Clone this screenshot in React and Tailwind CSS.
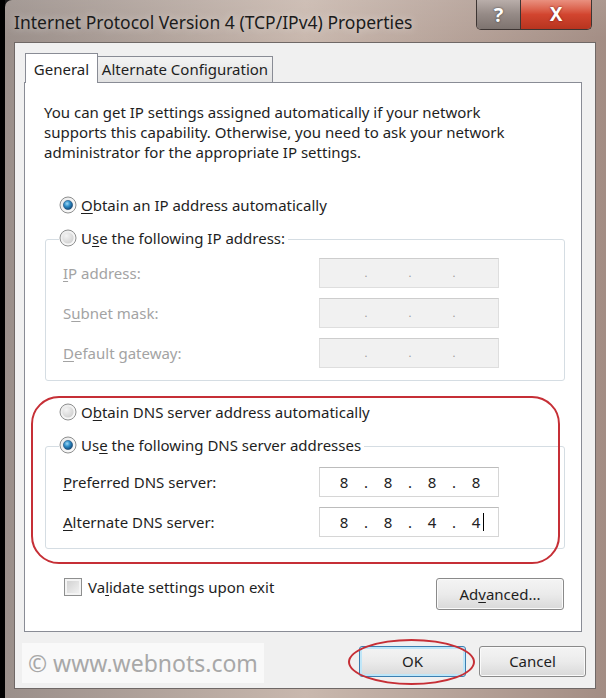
import React from 'react';

/**
 * Win7 style radio bullet
 */
function Radio({ checked = false }) {
  return (
    <svg width="18" height="18" viewBox="0 0 18 18" className="shrink-0">
      <defs>
        <linearGradient id="radioRing" x1="0" y1="0" x2="1" y2="1">
          <stop offset="0" stopColor="#e9e9e9" />
          <stop offset="1" stopColor="#fdfdfd" />
        </linearGradient>
        <radialGradient id="radioDot" cx="0.4" cy="0.35" r="0.7">
          <stop offset="0" stopColor="#9fd8f6" />
          <stop offset="0.45" stopColor="#2f8ec8" />
          <stop offset="1" stopColor="#0f3f6e" />
        </radialGradient>
        <radialGradient id="radioEmpty" cx="0.35" cy="0.3" r="0.8">
          <stop offset="0" stopColor="#f4f4f4" />
          <stop offset="1" stopColor="#cfcfcf" />
        </radialGradient>
      </defs>
      <circle cx="9" cy="9" r="8" fill="url(#radioRing)" stroke="#8e8f8f" strokeWidth="1" />
      {checked ? (
        <circle cx="9" cy="9" r="4.6" fill="url(#radioDot)" stroke="#1d4f7c" strokeWidth="0.6" />
      ) : (
        <circle cx="9" cy="9" r="5.6" fill="url(#radioEmpty)" />
      )}
    </svg>
  );
}

function RadioRow({ checked, children }) {
  return (
    <div className="ml-[15px] h-[20px] flex items-center relative z-10 self-start bg-white pr-[3px]">
      <Radio checked={checked} />
      <span className="ml-[4px] text-[15px] leading-[20px] text-[#1e1e1e]">{children}</span>
    </div>
  );
}

/**
 * IP address box - four cells split by dots
 */
function IpBox({ values, disabled = false, caret = false }) {
  const cells = values || ['', '', '', ''];
  return (
    <div
      className={[
        'w-[180px] h-[30px] flex items-center pl-[6px] border',
        disabled
          ? 'bg-[#f1f1f1] border-[#dedede] border-t-[#cdcdcd]'
          : 'bg-white border-[#d6d6d6] border-t-[#bcbcbc]',
      ].join(' ')}
    >
      {cells.map((v, i) => (
        <React.Fragment key={i}>
          <span className="w-[36px] text-center text-[15px] leading-[20px] text-[#222] relative">
            {v}
            {caret && i === 3 && (
              <span className="absolute top-[1px] right-[10px] w-px h-[18px] bg-black" />
            )}
          </span>
          {i < 3 && (
            <span
              className={[
                'w-[8px] text-center leading-[20px]',
                disabled ? 'text-[11px] text-[#9a9a9a]' : 'text-[15px] text-[#222]',
              ].join(' ')}
            >
              .
            </span>
          )}
        </React.Fragment>
      ))}
    </div>
  );
}

function FieldRow({ label, accessIdx, disabled, values, caret }) {
  return (
    <div className="flex items-center h-[30px]">
      <span
        className={[
          'w-[256px] text-[15px] leading-[20px]',
          disabled ? 'text-[#a3a3a3]' : 'text-[#1e1e1e]',
        ].join(' ')}
      >
        {label.slice(0, accessIdx)}
        <span className="underline underline-offset-2">{label[accessIdx]}</span>
        {label.slice(accessIdx + 1)}
      </span>
      <IpBox values={values} disabled={disabled} caret={caret} />
    </div>
  );
}

function Key({ children }) {
  return <span className="underline underline-offset-2">{children}</span>;
}

function WinButton({ children, isDefault = false, className = '' }) {
  return (
    <div
      className={[
        'flex items-center justify-center rounded-[3px] border text-[15px] text-[#1e1e1e]',
        'bg-gradient-to-b from-[#f4f4f4] via-[#ebebeb] to-[#d9d9d9]',
        isDefault
          ? 'border-[#3c7fb1] shadow-[inset_0_0_0_2px_#bfe6f8]'
          : 'border-[#8a8a8a] shadow-[inset_0_0_0_1px_#fafafa]',
        className,
      ].join(' ')}
    >
      {children}
    </div>
  );
}

export default function App() {
  return (
    <div className="relative w-[606px] h-[698px] bg-black flex overflow-hidden font-['Noto_Sans',sans-serif]">
      {/* Aero glass frame */}
      <div className="ml-[5px] flex-1 flex flex-col rounded-tl-[7px] bg-gradient-to-r from-[#9a8f8a] via-[#c9b8ae] to-[#a38d84]">
        {/* Title bar */}
        <div className="h-[42px] flex items-start pl-[9px] bg-gradient-to-b from-white/10 to-transparent">
          <div className="mt-[9px] text-[17.5px] leading-[26px] text-[#1b1b1b] [text-shadow:0_0_8px_rgba(255,255,255,0.6)]">
            Internet Protocol Version 4 (TCP/IPv4) Properties
          </div>
          <div className="ml-auto mr-[14px] flex h-[30px] rounded-b-[5px] border border-t-0 border-[#3d3533] overflow-hidden">
            <div className="w-[44px] flex items-center justify-center bg-gradient-to-b from-[#b9aeaa] via-[#958a86] to-[#7e7470] border-r border-[#3d3533] text-white text-[20px] font-bold leading-none [text-shadow:0_0_2px_#333]">
              ?
            </div>
            <div className="w-[70px] flex items-center justify-center bg-gradient-to-b from-[#e9907f] via-[#d2452f] to-[#b7341f] text-white text-[19px] font-bold leading-none [text-shadow:0_0_2px_#611]">
              X
            </div>
          </div>
        </div>

        {/* Client area */}
        <div className="ml-[9px] mr-[10px] h-[647px] bg-[#f0f0f0] border border-[#6f6866] flex flex-col">
          {/* Tabs */}
          <div className="ml-[10px] mt-[11px] h-[29px] flex items-end relative z-10 -mb-px">
            <div className="w-[73px] h-[30px] bg-white border border-b-0 border-[#898c95] flex items-center justify-center text-[15px] text-[#1e1e1e] pt-[1px]">
              General
            </div>
            <div className="w-[175px] h-[26px] mb-px bg-gradient-to-b from-[#f3f3f3] to-[#e2e2e2] border border-l-0 border-b-0 border-[#898c95] flex items-center justify-center text-[15px] text-[#1e1e1e]">
              Alternate Configuration
            </div>
          </div>

          {/* Tab panel */}
          <div className="ml-[9px] w-[558px] h-[550px] bg-white border border-[#898c95] pl-[19px] pr-[17px] pt-[19px] flex flex-col">
            <p className="text-[15px] leading-[20px] text-[#1e1e1e]">
              You can get IP settings assigned automatically if your network
              <br />
              supports this capability. Otherwise, you need to ask your network
              <br />
              administrator for the appropriate IP settings.
            </p>

            <div className="mt-[33px] flex flex-col">
              <RadioRow checked>
                <Key>O</Key>btain an IP address automatically
              </RadioRow>
            </div>
            <div className="mt-[13px] flex flex-col">
              <RadioRow>
                U<Key>s</Key>e the following IP address:
              </RadioRow>
              <div className="-mt-[9px] ml-px w-[520px] h-[142px] border border-[#d5dde3] rounded-[3px] pl-[17px] pt-[18px] flex flex-col gap-[10px]">
                <FieldRow label="IP address:" accessIdx={0} disabled />
                <FieldRow label="Subnet mask:" accessIdx={1} disabled />
                <FieldRow label="Default gateway:" accessIdx={0} disabled />
              </div>
            </div>

            <div className="mt-[21px] flex flex-col">
              <RadioRow>
                O<Key>b</Key>tain DNS server address automatically
              </RadioRow>
            </div>
            <div className="mt-[13px] flex flex-col">
              <RadioRow checked>
                Us<Key>e</Key> the following DNS server addresses
              </RadioRow>
              <div className="-mt-[9px] ml-px w-[520px] h-[103px] border border-[#d5dde3] rounded-[3px] pl-[17px] pt-[20px] flex flex-col gap-[10px]">
                <FieldRow label="Preferred DNS server:" accessIdx={0} values={['8', '8', '8', '8']} />
                <FieldRow label="Alternate DNS server:" accessIdx={0} values={['8', '8', '4', '4']} caret />
              </div>
            </div>

            <div className="mt-[29px] flex items-start">
              <div className="ml-[20px] w-[18px] h-[18px] border border-[#8e8f8f] bg-gradient-to-br from-[#cdcdcd] to-[#f6f6f6] shadow-[inset_0_0_0_2px_#f4f4f4]" />
              <span className="ml-[6px] text-[15px] leading-[18px] text-[#1e1e1e]">
                Va<Key>l</Key>idate settings upon exit
              </span>
              <WinButton className="ml-auto w-[128px] h-[32px]">
                Ad<Key>v</Key>anced...
              </WinButton>
            </div>
          </div>

          {/* Bottom row */}
          <div className="flex items-start mt-[11px]">
            <div className="ml-[7px] h-[40px] px-[6px] bg-white/60 flex items-center text-[23px] text-[#a8a8a8] leading-none">
              © www.webnots.com
            </div>
            <WinButton isDefault className="ml-auto mt-[3px] w-[107px] h-[31px]">
              OK
            </WinButton>
            <WinButton className="ml-[13px] mr-[9px] mt-[3px] w-[107px] h-[31px]">
              Cancel
            </WinButton>
          </div>
        </div>
      </div>

      {/* Red annotation marks drawn over the dialog */}
      <div className="absolute left-[31px] top-[396px] w-[529px] h-[168px] border-2 border-[#c62f36] rounded-[28px] pointer-events-none" />
      <div className="absolute left-[348px] top-[639px] w-[127px] h-[46px] border-2 border-[#c62f36] rounded-[50%] pointer-events-none" />
    </div>
  );
}
